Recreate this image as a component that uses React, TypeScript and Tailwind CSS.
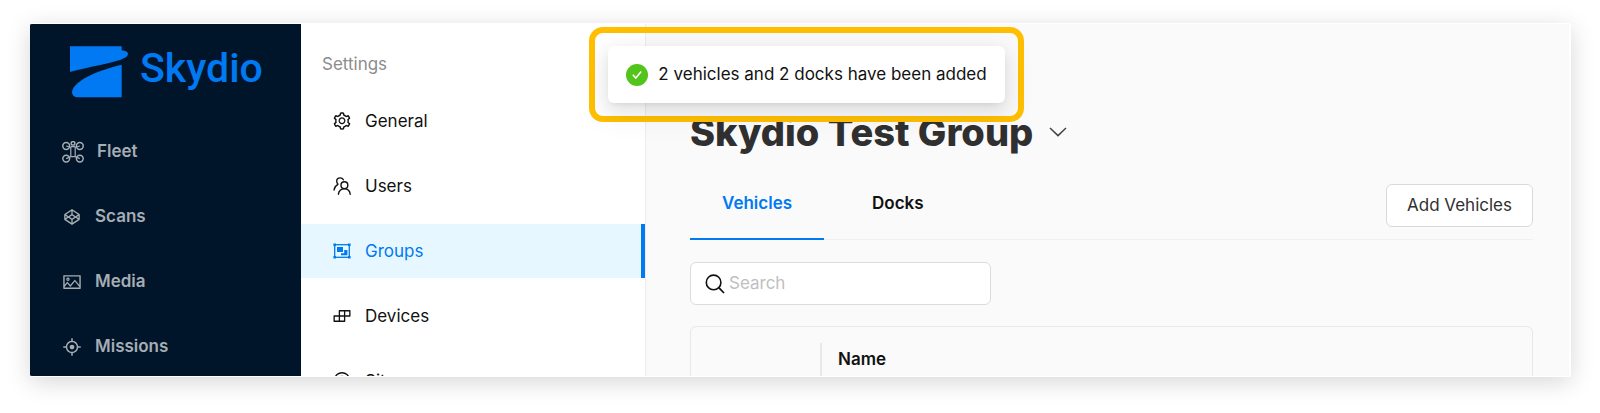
import React from 'react';
import {
  AiOutlineAim,
  AiOutlineBuild,
  AiOutlineCodepen,
  AiOutlinePicture,
  AiOutlineSetting,
} from 'react-icons/ai';

function cn(...inputs: any[]) {
  return inputs.filter(Boolean).join(' ');
}

function LogoMark() {
  return (
    <svg viewBox="0 0 174 154" className="w-[58px] h-[52px]" fill="currentColor" aria-hidden="true">
      <path d="M0 0H155V12C168 13 174 17 174 23C172 46 90 52 0 77Z" />
      <path d="M155 55V153H25C12 153 6 146 6 137C8 108 70 75 155 55Z" />
    </svg>
  );
}

function DroneIcon() {
  return (
    <svg viewBox="0 0 22 22" className="size-[22px]" fill="none" stroke="currentColor" strokeWidth="1.5" aria-hidden="true">
      <circle cx="4.2" cy="5" r="3.4" />
      <circle cx="17.8" cy="5" r="3.4" />
      <circle cx="4.2" cy="17.6" r="3.4" />
      <circle cx="17.8" cy="17.6" r="3.4" />
      <rect x="9.2" y="0.8" width="3.6" height="3.2" rx="1" />
      <path d="M4.2 5L8.8 6.4V15.6L4.2 17.6M17.8 5L13.2 6.4V15.6L17.8 17.6M8.8 5.6H13.2M8.8 15.6H13.2" strokeWidth="1.2" />
    </svg>
  );
}

function UsersIcon() {
  return (
    <svg viewBox="0 0 18 18" className="size-[18px]" fill="none" stroke="currentColor" strokeWidth="1.4" strokeLinecap="round" aria-hidden="true">
      <circle cx="11.4" cy="8.2" r="3.4" />
      <path d="M5.4 17.2C5.8 14.2 8.2 11.9 11.4 11.9C14.6 11.9 16.9 14.2 17.2 17.2" />
      <path d="M10.4 2.8C9.8 1.6 8.6 0.9 7.2 0.9C5.2 0.9 3.7 2.4 3.7 4.3C3.7 5.4 4.1 6.4 4.9 7.1M4.9 7.4C2.8 8.6 1.4 10.4 1.1 13" />
    </svg>
  );
}

function GroupIcon() {
  return (
    <svg viewBox="0 0 18 16" className="w-[18px] h-[16px]" fill="none" stroke="currentColor" aria-hidden="true">
      <rect x="1.7" y="1.7" width="14.6" height="12.6" strokeWidth="1.3" />
      <path d="M0.4 0.4H3V3H0.4ZM15 0.4H17.6V3H15ZM0.4 13H3V15.6H0.4ZM15 13H17.6V15.6H15Z" fill="currentColor" stroke="none" />
      <path d="M4 4H10V9H4Z" fill="currentColor" stroke="none" />
      <path d="M11.2 7H14.4V12.2H8V10.2H11.2Z" fill="currentColor" stroke="none" />
    </svg>
  );
}

function SitesIcon() {
  return (
    <svg viewBox="0 0 18 18" className="size-[18px]" fill="none" stroke="currentColor" strokeWidth="1.4" aria-hidden="true">
      <path d="M9 17C5 13.5 2 11 2 7A7 6.3 0 0 1 16 7C16 11 13 13.5 9 17Z" />
      <circle cx="9" cy="7.2" r="2.8" />
    </svg>
  );
}

function SearchIcon() {
  return (
    <svg viewBox="0 0 20 20" className="size-5" fill="none" stroke="#111111" strokeWidth="1.6" aria-hidden="true">
      <circle cx="8.6" cy="8.4" r="7.3" />
      <path d="M13.8 13.6L19 19" strokeWidth="1.8" />
    </svg>
  );
}

function CheckIcon() {
  return (
    <svg viewBox="0 0 22 22" className="size-[22px]" fill="none" aria-hidden="true">
      <circle cx="11" cy="11" r="11" fill="#52c41a" />
      <path d="M6.8 10.8L9.8 14L15.2 7.6" stroke="#ffffff" strokeWidth="1.6" />
    </svg>
  );
}

const mainNav = [
  { label: 'Fleet', icon: <DroneIcon /> },
  { label: 'Scans', icon: <AiOutlineCodepen size={20} /> },
  { label: 'Media', icon: <AiOutlinePicture size={20} /> },
  { label: 'Missions', icon: <AiOutlineAim size={20} /> },
];

const settingsNav = [
  { label: 'General', icon: <AiOutlineSetting size={20} /> },
  { label: 'Users', icon: <UsersIcon /> },
  { label: 'Groups', icon: <GroupIcon />, active: true },
  { label: 'Devices', icon: <AiOutlineBuild size={20} /> },
  { label: 'Sites', icon: <SitesIcon /> },
];

function Sidebar() {
  return (
    <aside className="w-[271px] shrink-0 bg-[#001529]">
      <a href="#" className="flex gap-3 pl-10 pt-[22px] h-[101px] text-[#0079f3]">
        <LogoMark />
        <span className="font-[Roboto,sans-serif] text-[41px] leading-[44px] font-medium">Skydio</span>
      </a>
      <nav className="flex flex-col gap-[11px]">
        {mainNav.map((item) => (
          <a key={item.label} href="#" className="flex items-center gap-[13px] h-[54px] pl-8 text-[17px] font-semibold text-[#a6adb4]">
            {item.icon}
            <span>{item.label}</span>
          </a>
        ))}
      </nav>
    </aside>
  );
}

function SettingsMenu() {
  return (
    <section className="w-[345px] shrink-0 bg-white border-r border-[#ececec]">
      <h2 className="pl-[21px] pt-7 h-[70px] text-[17px] text-[#8c8c8c]">Settings</h2>
      <nav className="flex flex-col gap-[11px]">
        {settingsNav.map((item) => (
          <a
            key={item.label}
            href="#"
            className={cn(
              'flex items-center gap-[13px] h-[54px] pl-[31px] text-[17px]',
              item.active ? 'bg-[#e6f7ff] text-[#0079f3] border-r-4 border-[#0079f3]' : 'text-[#111111]'
            )}
          >
            <span className="w-5 flex justify-center">{item.icon}</span>
            <span className="pt-0.5">{item.label}</span>
          </a>
        ))}
      </nav>
    </section>
  );
}

function GroupPage() {
  return (
    <main className="flex-1 min-w-0 bg-[#fafafa] pl-11 pr-9 pt-[83px]">
      <div className="flex items-center gap-4">
        <h1 className="text-[38px] leading-[50px] font-extrabold text-[#303030]">Skydio Test Group</h1>
        <button type="button" aria-label="Switch group" className="text-[#444444]">
          <svg viewBox="0 0 18 10" className="w-[18px] h-[10px]" fill="none" stroke="currentColor" strokeWidth="1.5" aria-hidden="true">
            <path d="M1 1L9 8.6L17 1" />
          </svg>
        </button>
      </div>

      <div className="flex items-end justify-between h-[83px] border-b border-[#f0f0f0]">
        <div role="tablist" className="flex gap-4">
          <button role="tab" aria-selected="true" type="button" className="px-8 h-[70px] -mb-px text-[17px] font-semibold text-[#0079f3] border-b-2 border-[#0079f3]">
            Vehicles
          </button>
          <button role="tab" aria-selected="false" type="button" className="px-8 h-[70px] -mb-px text-[17px] font-semibold text-[#111111] border-b-2 border-transparent">
            Docks
          </button>
        </div>
        <button type="button" className="h-[43px] mb-3 px-5 rounded-md border border-[#d9d9d9] bg-white text-[17px] text-[#303030]">
          Add Vehicles
        </button>
      </div>

      <label className="flex items-center gap-1 mt-[22px] w-[301px] h-[43px] px-[14px] rounded-md border border-[#dcdcdc] bg-white">
        <SearchIcon />
        <input type="text" aria-label="Search" placeholder="Search" className="min-w-0 flex-1 text-[17px] outline-none placeholder:text-[#bfbfbf]" />
      </label>

      <div className="mt-[21px] rounded-md border border-[#e8e8e8]">
        <table className="w-full h-[300px] text-left text-[17px]">
          <thead>
            <tr className="h-[66px]">
              <th className="w-[131px] p-0 py-4">
                <div className="h-[34px] border-r-2 border-[#e8e8e8]" />
              </th>
              <th className="px-4 font-semibold text-[#111111]">Name</th>
            </tr>
          </thead>
          <tbody>
            <tr>
              <td />
              <td />
            </tr>
          </tbody>
        </table>
      </div>
    </main>
  );
}

export default function App() {
  return (
    <div className="h-screen flex flex-col bg-white pl-[30px] pr-[29px] pt-[23px] pb-9 font-[Inter,sans-serif]">
      <div className="relative flex flex-1 min-h-0 overflow-hidden rounded-xs border-y border-r-2 border-white bg-white shadow-[0_5px_24px_rgba(0,0,0,0.16)]">
        <Sidebar />
        <SettingsMenu />
        <GroupPage />

        {/* Toast */}
        <div className="absolute inset-x-0 top-[3px] pl-[14px] flex justify-center pointer-events-none">
          <div className="p-[13px] rounded-[14px] border-6 border-[#ffbf00]">
            <div
              role="status"
              className="flex items-center gap-[10px] h-[57px] px-[18px] rounded-md bg-white text-[17px] text-[#111111] shadow-[0_3px_6px_-4px_rgba(0,0,0,0.12),0_6px_16px_rgba(0,0,0,0.08),0_9px_28px_8px_rgba(0,0,0,0.05)]"
            >
              <CheckIcon />
              <span>2 vehicles and 2 docks have been added</span>
            </div>
          </div>
        </div>
      </div>
    </div>
  );
}
